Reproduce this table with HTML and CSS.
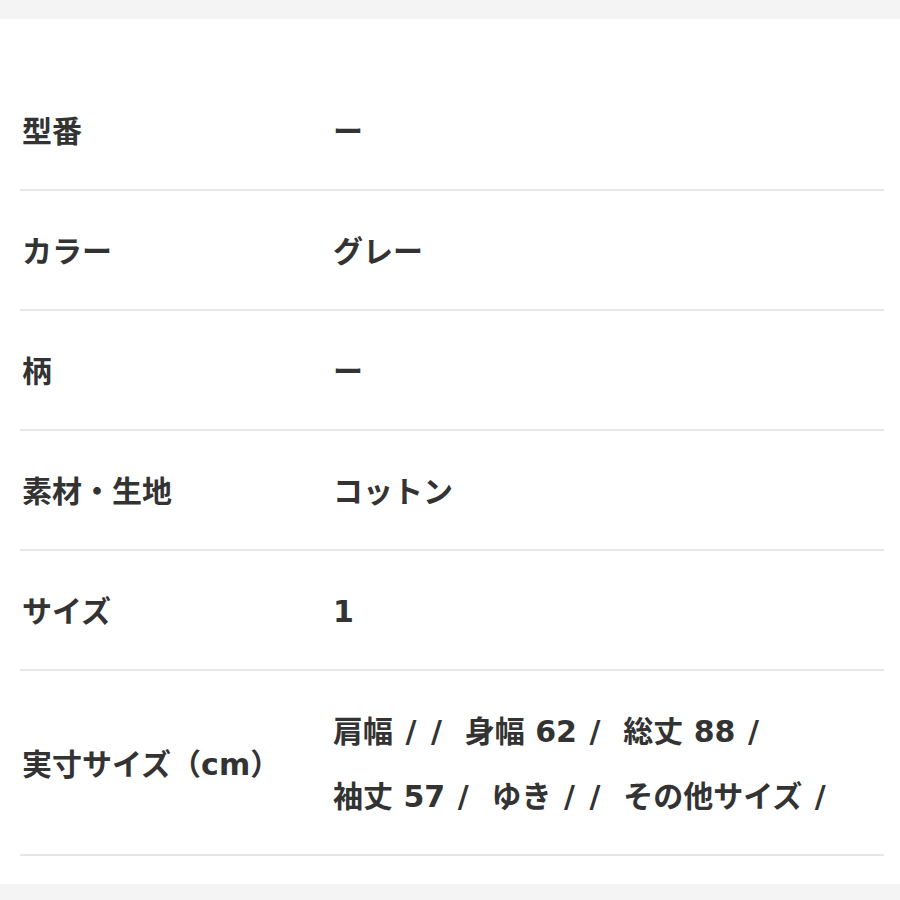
FILE: index.html
```html
<!DOCTYPE html>
<html lang="ja">
<head>
<meta charset="utf-8">
<link rel="stylesheet" href="styles.css">
</head>
<body>
<div class="page">
  <div class="sheet">
    <dl class="spec">
      <div class="row"><dt>型番</dt><dd>ー</dd></div>
      <div class="row"><dt>カラー</dt><dd>グレー</dd></div>
      <div class="row"><dt>柄</dt><dd>ー</dd></div>
      <div class="row"><dt>素材・生地</dt><dd>コットン</dd></div>
      <div class="row"><dt>サイズ</dt><dd>1</dd></div>
      <div class="row"><dt>実寸サイズ（cm）</dt><dd><span class="line">肩幅 <span class="sl">/</span> <span class="sl">/</span>&nbsp; 身幅 62 <span class="sl">/</span>&nbsp; 総丈 88 <span class="sl">/</span></span><span class="line">袖丈 57 <span class="sl">/</span>&nbsp; ゆき <span class="sl">/</span> <span class="sl">/</span>&nbsp; その他サイズ <span class="sl">/</span></span></dd></div>
    </dl>
  </div>
</div>
</body>
</html>
```
FILE: styles.css
```css
html, body {
  margin: 0;
  padding: 0;
  background: #f4f4f4;
}
.page {
  width: 900px;
  height: 900px;
  padding: 19px 0 16px;
  box-sizing: border-box;
  display: flex;
  flex-direction: column;
}
.sheet {
  flex: 1;
  background: #ffffff;
  padding: 52px 16px 0 20px;
}
.spec {
  margin: 0;
  font-family: "DejaVu Sans", "Noto Sans CJK JP", sans-serif;
  font-weight: 700;
  font-size: 30px;
  color: #333333;
}
.row {
  display: flex;
  align-items: center;
  padding: 28px 0 25px;
  border-bottom: 2px solid #e6e6e6;
  line-height: 65px;
}
.row dt {
  width: 313px;
  flex: none;
  padding-left: 2px;
  box-sizing: border-box;
}
.row dd {
  margin: 0;
  flex: 1;
}
.line {
  display: block;
}
.sl {
  display: inline-block;
  padding: 0 2px;
}
```
